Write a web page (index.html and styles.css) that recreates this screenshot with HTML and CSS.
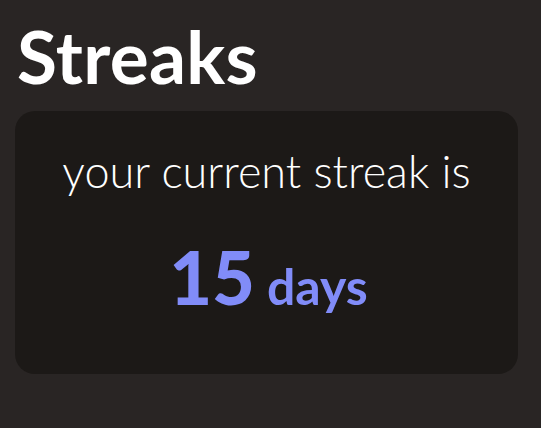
FILE: index.html
```html
<!DOCTYPE html>
<html lang="en">
<head>
<meta charset="utf-8">
<title>Streaks</title>
<link rel="stylesheet" href="styles.css">
</head>
<body>
<main class="page">
  <h1 class="title">Streaks</h1>
  <section class="card">
    <p class="label">your current streak is</p>
    <p class="count"><span class="num">15</span><span class="unit">days</span></p>
  </section>
</main>
</body>
</html>
```
FILE: styles.css
```css
html, body {
  margin: 0;
  padding: 0;
  background: #292524;
  height: 100%;
}
.page {
  padding: 18px 23px 0 15px;
  font-family: "Lato", "Noto Sans", sans-serif;
  color: #ffffff;
}
.title {
  margin: 0 0 0 2px;
  font-size: 73px;
  font-weight: 700;
  line-height: 76px;
  letter-spacing: 0.3px;
}
.card {
  margin-top: 17px;
  height: 263px;
  background: #1c1917;
  border-radius: 20px;
  display: flex;
  flex-direction: column;
  align-items: center;
  box-sizing: border-box;
  padding-top: 30px;
}
.label {
  margin: 0;
  font-size: 45px;
  font-weight: 300;
  line-height: 60px;
}
.count {
  margin: 40px 0 0 4px;
  display: flex;
  align-items: baseline;
  gap: 12px;
  color: #818cf8;
  line-height: 72px;
}
.num {
  font-size: 74px;
  font-weight: 900;
}
.unit {
  font-size: 50px;
  font-weight: 700;
}
```
